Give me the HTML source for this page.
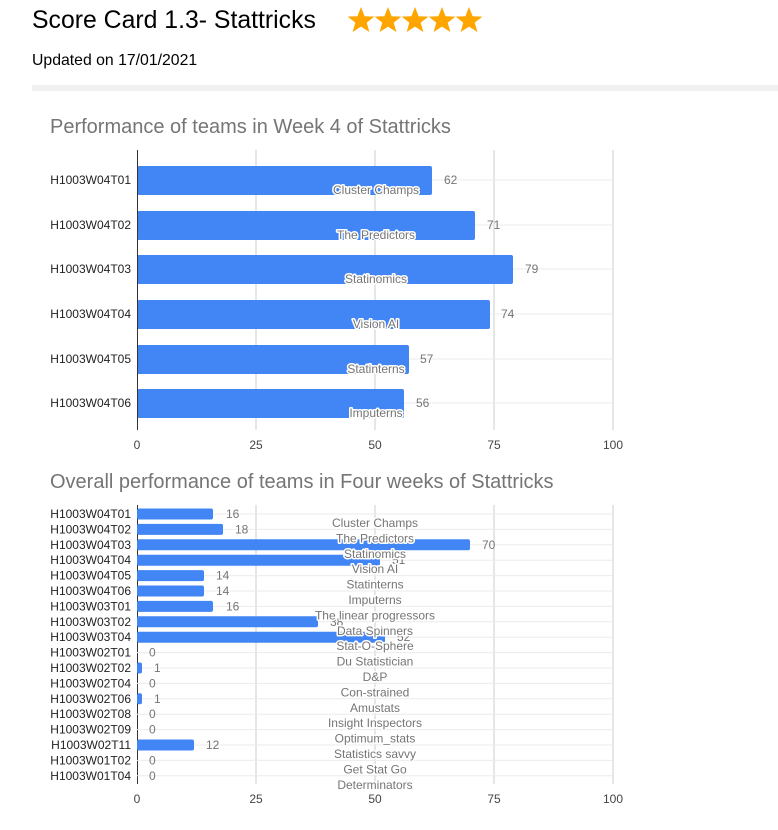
<!DOCTYPE html>
<html><head><meta charset="utf-8"><style>
html,body{margin:0;padding:0;background:#fff;width:778px;height:830px;overflow:hidden}
svg{display:block}
text{font-family:"Liberation Sans",Arial,sans-serif}
.yl{font-size:12px;fill:#222;text-anchor:end}
.vl{font-size:12px;fill:#757575}
.an{font-size:12px;fill:#757575;text-anchor:middle;stroke:#fff;stroke-width:3px;paint-order:stroke;stroke-linejoin:round}
.xl{font-size:12px;fill:#444;text-anchor:middle}
.g{stroke:#ccc;stroke-width:1}
.hg{stroke:#ebebeb;stroke-width:1}
</style></head><body>
<svg width="778" height="830" xmlns="http://www.w3.org/2000/svg">
<text x="32" y="28" font-size="24.8" fill="#000">Score Card 1.3- Stattricks</text>
<g fill="#FFA500">
<path id="st" d="M361 7 L364.6 16.2 L374.4 16.6 L366.7 22.6 L369.4 32 L361 26.6 L352.6 32 L355.3 22.6 L347.6 16.6 L357.4 16.2 Z"/>
<use href="#st" x="27"/><use href="#st" x="54"/><use href="#st" x="81"/><use href="#st" x="108"/>
</g>
<text x="32" y="65" font-size="15.8" fill="#000">Updated on 17/01/2021</text>
<rect x="32" y="85" width="746" height="6" fill="#f1f1f1"/>

<text x="50" y="133" font-size="20" fill="#757575">Performance of teams in Week 4 of Stattricks</text>
<g id="c1">
<line class="g" x1="256" y1="150" x2="256" y2="430"/>
<line class="g" x1="375" y1="150" x2="375" y2="430"/>
<line class="g" x1="494" y1="150" x2="494" y2="430"/>
<line class="g" x1="613" y1="150" x2="613" y2="430"/>
<line class="hg" x1="137" y1="180" x2="613" y2="180"/>
<line class="hg" x1="137" y1="225" x2="613" y2="225"/>
<line class="hg" x1="137" y1="269" x2="613" y2="269"/>
<line class="hg" x1="137" y1="314" x2="613" y2="314"/>
<line class="hg" x1="137" y1="359" x2="613" y2="359"/>
<line class="hg" x1="137" y1="403" x2="613" y2="403"/>
<g fill="#4285f4">
<rect x="137" y="166" width="295" height="29" rx="2"/>
<rect x="137" y="211" width="338" height="29" rx="2"/>
<rect x="137" y="255" width="376" height="29" rx="2"/>
<rect x="137" y="300" width="353" height="29" rx="2"/>
<rect x="137" y="345" width="272" height="29" rx="2"/>
<rect x="137" y="389" width="267" height="29" rx="2"/>
</g>
<line x1="137.5" y1="150" x2="137.5" y2="430" stroke="#333" stroke-width="1"/>
<text class="yl" x="131" y="184">H1003W04T01</text>
<text class="yl" x="131" y="229">H1003W04T02</text>
<text class="yl" x="131" y="273">H1003W04T03</text>
<text class="yl" x="131" y="318">H1003W04T04</text>
<text class="yl" x="131" y="363">H1003W04T05</text>
<text class="yl" x="131" y="407">H1003W04T06</text>
<text class="vl" x="444" y="184">62</text>
<text class="vl" x="487" y="229">71</text>
<text class="vl" x="525" y="273">79</text>
<text class="vl" x="501" y="318">74</text>
<text class="vl" x="420" y="363">57</text>
<text class="vl" x="416" y="407">56</text>
<text class="an" x="376" y="194">Cluster Champs</text>
<text class="an" x="376" y="239">The Predictors</text>
<text class="an" x="376" y="283">Statinomics</text>
<text class="an" x="376" y="328">Vision AI</text>
<text class="an" x="376" y="373">Statinterns</text>
<text class="an" x="376" y="417">Imputerns</text>
<text class="xl" x="137" y="449">0</text>
<text class="xl" x="256" y="449">25</text>
<text class="xl" x="375" y="449">50</text>
<text class="xl" x="494" y="449">75</text>
<text class="xl" x="613" y="449">100</text>
</g>

<text x="50" y="488" font-size="20" fill="#757575">Overall performance of teams in Four weeks of Stattricks</text>
<g>
<line class="g" x1="256" y1="505" x2="256" y2="784"/>
<line class="g" x1="375" y1="505" x2="375" y2="784"/>
<line class="g" x1="494" y1="505" x2="494" y2="784"/>
<line class="g" x1="613" y1="505" x2="613" y2="784"/>
</g>
<line x1="137.5" y1="505" x2="137.5" y2="784" stroke="#333" stroke-width="1"/>
<text class="xl" x="137" y="803">0</text>
<text class="xl" x="256" y="803">25</text>
<text class="xl" x="375" y="803">50</text>
<text class="xl" x="494" y="803">75</text>
<text class="xl" x="613" y="803">100</text>
<g>
<line class="hg" x1="137" y1="514" x2="613" y2="514"/><rect x="137" y="508.5" width="76" height="11" rx="2" fill="#4285f4"/><text class="yl" x="131" y="518">H1003W04T01</text><text class="vl" x="226" y="518">16</text>
<line class="hg" x1="137" y1="529.4" x2="613" y2="529.4"/><rect x="137" y="523.9" width="86" height="11" rx="2" fill="#4285f4"/><text class="yl" x="131" y="533.4">H1003W04T02</text><text class="vl" x="235" y="533.4">18</text>
<line class="hg" x1="137" y1="544.8" x2="613" y2="544.8"/><rect x="137" y="539.3" width="333" height="11" rx="2" fill="#4285f4"/><text class="yl" x="131" y="548.8">H1003W04T03</text><text class="vl" x="482" y="548.8">70</text>
<line class="hg" x1="137" y1="560.2" x2="613" y2="560.2"/><rect x="137" y="554.7" width="243" height="11" rx="2" fill="#4285f4"/><text class="yl" x="131" y="564.2">H1003W04T04</text>
<line class="hg" x1="137" y1="575.6" x2="613" y2="575.6"/><rect x="137" y="570.1" width="67" height="11" rx="2" fill="#4285f4"/><text class="yl" x="131" y="579.6">H1003W04T05</text><text class="vl" x="216" y="579.6">14</text>
<line class="hg" x1="137" y1="591" x2="613" y2="591"/><rect x="137" y="585.5" width="67" height="11" rx="2" fill="#4285f4"/><text class="yl" x="131" y="595">H1003W04T06</text><text class="vl" x="216" y="595">14</text>
<line class="hg" x1="137" y1="606.4" x2="613" y2="606.4"/><rect x="137" y="600.9" width="76" height="11" rx="2" fill="#4285f4"/><text class="yl" x="131" y="610.4">H1003W03T01</text><text class="vl" x="226" y="610.4">16</text>
<line class="hg" x1="137" y1="621.8" x2="613" y2="621.8"/><rect x="137" y="616.3" width="181" height="11" rx="2" fill="#4285f4"/><text class="yl" x="131" y="625.8">H1003W03T02</text>
<line class="hg" x1="137" y1="637.2" x2="613" y2="637.2"/><rect x="137" y="631.7" width="248" height="11" rx="2" fill="#4285f4"/><text class="yl" x="131" y="641.2">H1003W03T04</text>
<line class="hg" x1="137" y1="652.6" x2="613" y2="652.6"/><text class="yl" x="131" y="656.6">H1003W02T01</text><text class="vl" x="149" y="656.6">0</text>
<line class="hg" x1="137" y1="668" x2="613" y2="668"/><rect x="137" y="662.5" width="5" height="11" rx="2" fill="#4285f4"/><text class="yl" x="131" y="672">H1003W02T02</text><text class="vl" x="154" y="672">1</text>
<line class="hg" x1="137" y1="683.4" x2="613" y2="683.4"/><text class="yl" x="131" y="687.4">H1003W02T04</text><text class="vl" x="149" y="687.4">0</text>
<line class="hg" x1="137" y1="698.8" x2="613" y2="698.8"/><rect x="137" y="693.3" width="5" height="11" rx="2" fill="#4285f4"/><text class="yl" x="131" y="702.8">H1003W02T06</text><text class="vl" x="154" y="702.8">1</text>
<line class="hg" x1="137" y1="714.2" x2="613" y2="714.2"/><text class="yl" x="131" y="718.2">H1003W02T08</text><text class="vl" x="149" y="718.2">0</text>
<line class="hg" x1="137" y1="729.6" x2="613" y2="729.6"/><text class="yl" x="131" y="733.6">H1003W02T09</text><text class="vl" x="149" y="733.6">0</text>
<line class="hg" x1="137" y1="745" x2="613" y2="745"/><rect x="137" y="739.5" width="57" height="11" rx="2" fill="#4285f4"/><text class="yl" x="131" y="749">H1003W02T11</text><text class="vl" x="206" y="749">12</text>
<line class="hg" x1="137" y1="760.4" x2="613" y2="760.4"/><text class="yl" x="131" y="764.4">H1003W01T02</text><text class="vl" x="149" y="764.4">0</text>
<line class="hg" x1="137" y1="775.8" x2="613" y2="775.8"/><text class="yl" x="131" y="779.8">H1003W01T04</text><text class="vl" x="149" y="779.8">0</text>
</g>
<text class="vl" x="392" y="564.2">51</text>
<text class="vl" x="330" y="625.8">38</text>
<text class="vl" x="397" y="641.2">52</text>
<g>
<text class="an" x="375" y="527">Cluster Champs</text>
<text class="an" x="375" y="542.4">The Predictors</text>
<text class="an" x="375" y="557.8">Statinomics</text>
<text class="an" x="375" y="573.2">Vision AI</text>
<text class="an" x="375" y="588.6">Statinterns</text>
<text class="an" x="375" y="604">Imputerns</text>
<text class="an" x="375" y="619.4">The linear progressors</text>
<text class="an" x="375" y="634.8">Data Spinners</text>
<text class="an" x="375" y="650.2">Stat-O-Sphere</text>
<text class="an" x="375" y="665.6">Du Statistician</text>
<text class="an" x="375" y="681">D&amp;P</text>
<text class="an" x="375" y="696.4">Con-strained</text>
<text class="an" x="375" y="711.8">Amustats</text>
<text class="an" x="375" y="727.2">Insight Inspectors</text>
<text class="an" x="375" y="742.6">Optimum_stats</text>
<text class="an" x="375" y="758">Statistics savvy</text>
<text class="an" x="375" y="773.4">Get Stat Go</text>
<text class="an" x="375" y="788.8">Determinators</text>
</g>
</svg>
</body></html>
